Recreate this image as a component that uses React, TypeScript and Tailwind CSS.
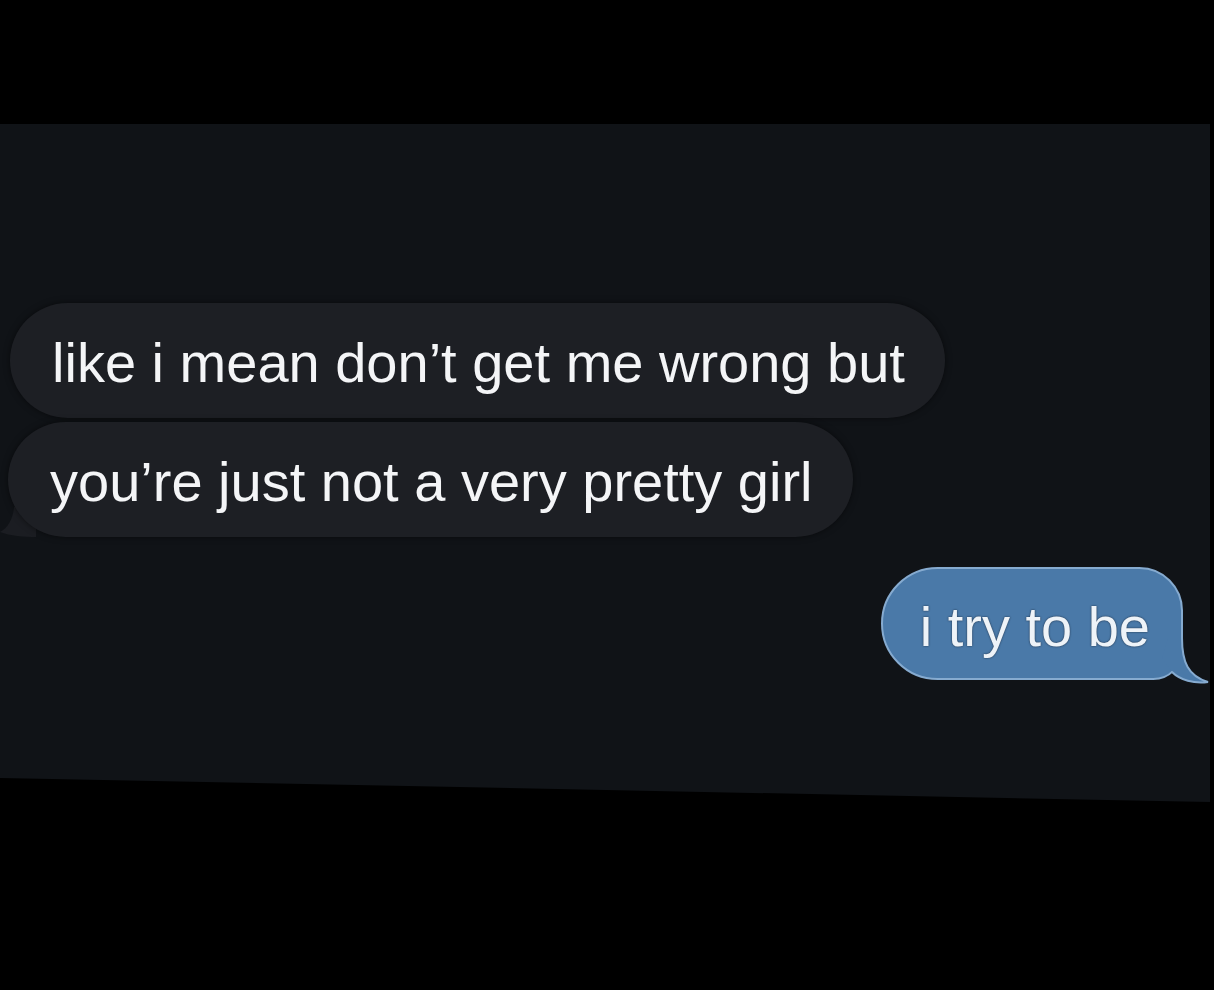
import React from "react";

function IncomingBubble({ text, tail = false }: { text: string; tail?: boolean }) {
  return (
    <div className="relative w-fit">
      {tail ? (
        <svg
          className="absolute -left-[8px] bottom-0 h-[30px] w-[36px]"
          viewBox="0 0 36 30"
          fill="#1b1d22"
        >
          <path d="M36 0 L36 30 C24 30 10 29 0 25 C8 21 13 12 14 0 Z" />
        </svg>
      ) : null}
      <div className="relative flex h-[115px] items-center rounded-full bg-[#1d1f24] pl-[42px] pr-[40px] shadow-[0_0_6px_rgba(0,0,0,0.5)]">
        <span className="pt-[4px] text-[56px] leading-none text-[#f4f5f7]">{text}</span>
      </div>
    </div>
  );
}

function OutgoingBubble({ text }: { text: string }) {
  return (
    <div className="relative w-fit">
      <div className="relative flex h-[113px] items-center rounded-l-[57px] rounded-tr-[44px] rounded-br-[30px] border-2 border-[#86abd0] bg-[#4a79a8] pl-[37px] pr-[31px]">
        <span className="pt-[6px] text-[56px] leading-none text-[#eef3f8] [text-shadow:0_0_2px_rgba(20,30,45,0.9)]">
          {text}
        </span>
      </div>
      {/* tail sweeps out of the bottom-right corner */}
      <svg
        className="absolute -right-[27px] -bottom-[4px] h-[46px] w-[62px] overflow-visible"
        viewBox="0 0 62 46"
      >
        <path d="M34 0 C34 24 40 38 60 44 C46 46 32 42 24 34 L14 20 L20 0 Z" fill="#4a79a8" />
        <path
          d="M34 0 C34 24 40 38 60 44 C46 46 32 42 24 34"
          fill="none"
          stroke="#86abd0"
          strokeWidth="2"
          strokeLinecap="round"
        />
      </svg>
    </div>
  );
}

export default function App() {
  return (
    <div className="h-[990px] w-[1214px] overflow-hidden bg-black font-['Liberation_Sans',Arial,sans-serif]">
      <div className="h-[124px]" />
      <div className="mr-[4px] h-[678px] bg-[#101317] pt-[179px] [clip-path:polygon(0_0,100%_0,100%_100%,0_calc(100%-24px))]">
        <div className="flex flex-col gap-[4px] pl-[10px]">
          <IncomingBubble text="like i mean don’t get me wrong but" />
          <div className="-ml-[2px]">
            <IncomingBubble text="you’re just not a very pretty girl" tail />
          </div>
        </div>
        <div className="mt-[30px] flex justify-end pr-[27px]">
          <OutgoingBubble text="i try to be" />
        </div>
      </div>
    </div>
  );
}
